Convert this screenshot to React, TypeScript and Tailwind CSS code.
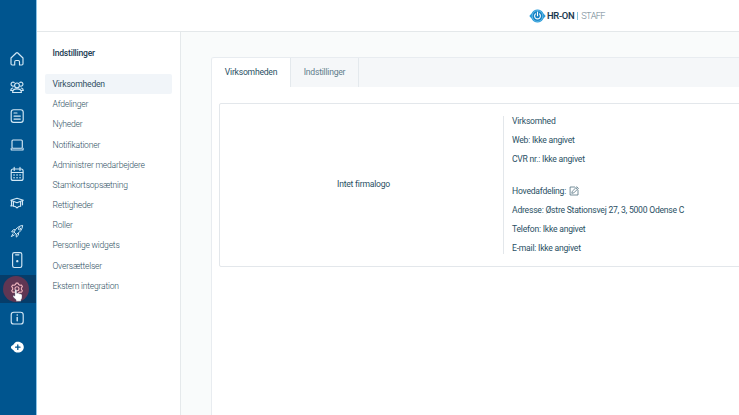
import type { ReactNode } from "react";

function Icon({ children }: { children: ReactNode }) {
  return (
    <svg
      viewBox="0 0 16 16"
      className="h-4 w-4 overflow-visible"
      fill="none"
      stroke="#d3e8f5"
      strokeWidth="1.15"
      strokeLinecap="round"
      strokeLinejoin="round"
    >
      {children}
    </svg>
  );
}

const navIcons: ReactNode[] = [
  <Icon key="home">
    <path d="M2 7 7.2 2Q8 1.3 8.8 2L14 7v5.8q0 1.2-1.2 1.2h-2.3V10.8q0-1.3-1.3-1.3H7q-1.3 0-1.3 1.3V14H3.2Q2 14 2 12.8Z" />
  </Icon>,
  <Icon key="people">
    <circle cx="8" cy="6.4" r="2.4" />
    <path d="M3.6 13.5q-.1-3.6 4.4-3.6t4.4 3.6ZM4.5 7.1A2 2 0 1 1 5.2 3.5M11.5 7.1a2 2 0 1 0-.7-3.6M3.8 9Q1.7 9.3 1.7 11.4h1.4M12.2 9q2.1.3 2.1 2.4h-1.4" />
  </Icon>,
  <Icon key="news">
    <rect x="2.2" y="1.7" width="12" height="12.7" rx="2.4" />
    <path d="M5 5h3M5 8.1h6.3M5 11.1h6.3" />
  </Icon>,
  <Icon key="laptop">
    <rect x="3" y="3" width="10.3" height="8.2" rx="1" />
    <path d="M2.2 11.4v1q0 .6.6.6h10.7q.6 0 .6-.6v-1" />
  </Icon>,
  <Icon key="calendar">
    <rect x="2.2" y="3" width="11.9" height="11.4" rx="2" />
    <path d="M2.5 6.5h11.3M5.2 1.4v3M11 1.4v3" />
    <path d="M5 9h.1M8 9h.1M11 9h.1M5 11.7h.1M8 11.7h.1M11 11.7h.1" strokeWidth="1.5" />
  </Icon>,
  <Icon key="education">
    <path d="M1.8 5.3 8 3.3l6.3 2L8 7.7ZM4.4 6.5v4.8Q6.4 10.8 8 13q1.6-2.2 3.6-1.7V6.5M2.5 5.8v4.9M1.8 10.8h1.4M13.5 5.8v4" />
  </Icon>,
  <Icon key="rocket">
    <path d="M5.2 8.6Q8 3.2 13.7 2.4q-.6 5.8-6 8.8ZM6 6.7H4.4L2.6 8.9 5 9M9.4 10.2v2l-2.1 1.9-.1-2.7M4 10.8l-1.7 2.8 2.9-1.6" strokeWidth="1" />
    <circle cx="10.4" cy="5.8" r="1.1" strokeWidth="1" />
  </Icon>,
  <Icon key="phone">
    <rect x="3.6" y=".6" width="9.2" height="14.9" rx="1.7" />
    <path d="M6.6 2.8h3.3" />
    <circle cx="8.3" cy="9.2" r=".6" fill="#d3e8f5" />
  </Icon>,
  <Icon key="settings">
    <g stroke="#f1b7bf" strokeWidth="1.1">
      <path d="m6.5 3.6.7-1.5h1.7l.7 1.5 1.3.7 1.6-.2.9 1.5-1 1.4v1.4l1 1.4-.9 1.5-1.6-.2-1.3.7-.7 1.5H7.2l-.7-1.5-1.3-.7-1.6.2-.9-1.5 1-1.4V7l-1-1.4.9-1.5 1.6.2Z" />
      <circle cx="8" cy="7.7" r="2" />
    </g>
  </Icon>,
  <Icon key="info">
    <rect x="2.2" y="2.2" width="12" height="11.8" rx="2.6" />
    <path d="M8.2 7.5v3.3" strokeWidth="1.4" />
    <path d="M8.2 5.1h.1" strokeWidth="1.5" />
  </Icon>,
  <Icon key="add">
    <path
      d="M1.9 8.2c.1-1.8 2-1.7 3-3.3C5.8 3.4 7 2.8 8.8 2.8c3.4 0 6 2.4 6 5.4s-2.6 5.4-6 5.4c-2.1 0-3.2-.7-4.1-2.1-.9-1.2-2.9-1.5-2.8-3.3Z"
      fill="white"
      stroke="none"
    />
    <path d="M8.8 6v4.4M6.6 8.2H11" stroke="#00558f" strokeWidth="1.3" />
  </Icon>,
];

const menu = [
  "Virksomheden", "Afdelinger", "Nyheder", "Notifikationer",
  "Administrer medarbejdere", "Stamkortsopsætning", "Rettigheder", "Roller",
  "Personlige widgets", "Oversættelser", "Ekstern integration",
];

function Pointer() {
  return (
    <svg viewBox="0 0 12 14" className="absolute top-[14px] left-[12px] h-[13px] w-[11px]">
      <path
        d="M3.2 7.8V1.7q0-1.2 1-1.2t1 1.2v3q.8-.7 1.6.1.9-.6 1.5.4 1-.4 1.5.5 1.1-.2 1.1 1v2.1q0 1.7-1.1 2.8v1.6H4.5v-1.5Q3 10.5 1.4 8.6q-.7-1 .1-1.5.8-.5 1.7.7Z"
        fill="white"
        stroke="#38536a"
        strokeWidth=".3"
      />
    </svg>
  );
}

function Logo() {
  return (
    <div className="flex items-center">
      <svg viewBox="0 0 17 14" className="h-3.5 w-[17px]">
        <path d="M.3 7 2.5 4.5Q4.5.6 8.5.6t6 3.9L16.7 7l-2.2 2.5q-2 3.9-6 3.9t-6-3.9Z" fill="#2a9bd8" />
        <circle cx="8.5" cy="7" r="5.2" fill="none" stroke="#b4e0f7" strokeWidth=".5" />
        <circle cx="8.5" cy="7" r="4.8" fill="#1682c3" />
        <path d="M6.5 4.9a2.9 2.9 0 1 0 4 0M8.5 3.1v3.6" fill="none" stroke="white" strokeWidth="1.1" strokeLinecap="round" />
      </svg>
      <span className="ml-px text-[9.4px] leading-3 font-medium tracking-[-0.32px] text-[#17384e] [-webkit-text-stroke:0.1px_#17384e]">HR-ON</span>
      <span className="ml-[3px] h-[8px] w-px bg-[#83c4de]" />
      <span className="ml-[3px] text-[9.2px] leading-3 font-light tracking-[-0.6px] text-[#6f8592]">STAFF</span>
    </div>
  );
}

export default function App() {
  return (
    <div className="flex h-[415px] w-[739px] overflow-hidden bg-white font-['Roboto',sans-serif] text-[8.6px] tracking-[-0.23px] text-[#2a5064]">
      <nav className="flex w-[37px] shrink-0 flex-col border-r border-[#8cc3e6] bg-[#00558f] pt-[44.2px]">
        {navIcons.map((icon, i) => (
          <div
            key={i}
            className={`relative flex h-[28.8px] shrink-0 items-center justify-center ${i === 8 ? "bg-[#063d6a]" : ""}`}
          >
            {i === 8 && <span className="absolute top-[1px] left-[2.5px] h-[26px] w-[26px] rounded-full bg-[#603653]" />}
            <span className="relative left-[-1px]">{icon}</span>
            {i === 8 && <Pointer />}
          </div>
        ))}
      </nav>
      <div className="flex min-w-0 grow flex-col">
        <header className="flex h-8 shrink-0 items-center border-b border-[#e4e8ea] pl-[492px]">
          <Logo />
        </header>
        <div className="flex min-h-0 grow">
          <aside className="w-[144px] shrink-0 border-r border-[#e5e9eb] pt-[14.5px] pl-[7.5px]">
            <h1 className="pl-2 text-[8.6px] leading-3 font-medium text-[#1d4055]">Indstillinger</h1>
            <ul className="mt-[15.8px] w-[127.5px]">
              {menu.map((label, i) => (
                <li
                  key={label}
                  className={`flex h-[20.2px] items-center rounded-[2px] pl-2 ${i === 0 ? "bg-[#f1f5f9] text-[#315064]" : "font-light text-[#2e5063]"}`}
                >
                  {label}
                </li>
              ))}
            </ul>
          </aside>
          <main className="min-w-0 grow overflow-hidden bg-[#f9fbfb] pt-[25px] pl-[30px]">
            <section className="h-full w-[560px] rounded-tl-[3px] border-t border-l border-[#e8ecf0] bg-white">
              <div className="flex h-[29px] bg-[#f5f7f9]">
                <div className="flex w-[79px] items-center justify-center rounded-tl-[3px] border-r border-[#e4e9ed] bg-white">Virksomheden</div>
                <div className="flex w-[68px] items-center justify-center border-r border-[#e4e9ed] text-[#617d8c]">Indstillinger</div>
              </div>
              <div className="mt-4 ml-[7px] flex h-[163.5px] rounded-[2px] border border-[#e3e7eb] py-3">
                <div className="flex w-[284px] items-center justify-center border-r border-[#e3e7eb] pl-1">
                  Intet firmalogo
                </div>
                <div className="flex flex-col pl-2 leading-[19px]">
                  <p className="-mt-1">Virksomhed</p>
                  <p>Web: Ikke angivet</p>
                  <p>CVR nr.: Ikke angivet</p>
                  <p className="mt-[13px] flex items-center">
                    Hovedafdeling:
                    <svg viewBox="0 0 10 10" className="mb-px ml-[2.5px] h-2.5 w-2.5" fill="none" stroke="#496a79" strokeWidth=".75" strokeLinejoin="round">
                      <path d="M6 1H1.1v8H9V4M3.2 5.4 7.8.8 9.4 2.3 4.8 6.9 2.8 7.3ZM6.9 1.8l1.5 1.5" />
                    </svg>
                  </p>
                  <p>Adresse: Østre Stationsvej 27, 3, 5000 Odense C</p>
                  <p>Telefon: Ikke angivet</p>
                  <p>E-mail: Ikke angivet</p>
                </div>
              </div>
            </section>
          </main>
        </div>
      </div>
    </div>
  );
}
